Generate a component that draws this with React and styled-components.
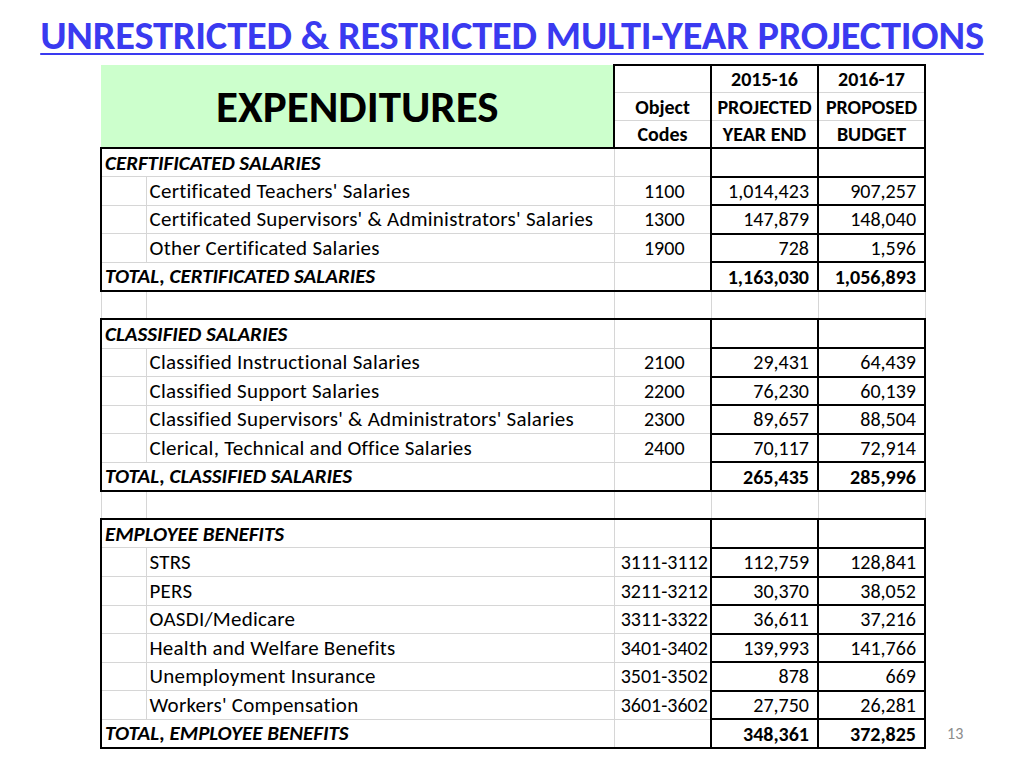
import styled, { createGlobalStyle, css } from "styled-components";

const GlobalStyle = createGlobalStyle`
    body {
        margin: 0;
        background: #ffffff;
        font-family: Carlito, Lato, "Liberation Sans", sans-serif;
        color: #000000;
    }
`;

const Page = styled.div`
    width: 1024px;
    height: 768px;
    display: flex;
    flex-direction: column;
    align-items: center;
    overflow: hidden;
`;

const Title = styled.h1`
    margin: 14px 0 0;
    font-size: 40.4px;
    font-weight: 700;
    color: #3a3af0;
    text-decoration: underline;
    text-decoration-thickness: 2px;
    text-underline-offset: 4px;
    line-height: 44px;
    letter-spacing: -0.2px;
`;

const Body = styled.div`
    align-self: flex-start;
    display: flex;
    align-items: flex-end;
    gap: 21px;
    margin-top: 6px;
    margin-left: 100px;
`;

const Sheet = styled.table`
    border-collapse: collapse;
    table-layout: fixed;
    width: 824px;
    font-size: 20px;
    col.indent { width: 45px; }
    col.label { width: 468px; }
    col.code { width: 97px; }
    col.num { width: 107px; }
`;

const Row = styled.tr`
    height: ${(p) => (p.$head ? "27.7px" : "28.57px")};
`;

const black = "2px solid #000000";

const Cell = styled.td`
    border: 1px solid #d6d6d6;
    padding: ${(p) => (p.$align === "center" ? "0 0 0 4px" : "0 8px 0 3px")};
    white-space: nowrap;
    overflow: visible;
    vertical-align: middle;
    line-height: 22px;
    text-align: ${(p) => p.$align || "left"};
    font-weight: ${(p) => (p.$bold ? 700 : 400)};
    font-style: ${(p) => (p.$italic ? "italic" : "normal")};
    ${(p) => p.$label && css`font-size: 21px; letter-spacing: 0.25px;`}
    ${(p) => p.$italic && css`font-size: 21px;`}
    ${(p) => p.$l && css`border-left: ${black};`}
    ${(p) => p.$r && css`border-right: ${black};`}
    ${(p) => p.$t && css`border-top: ${black};`}
    ${(p) => p.$b && css`border-bottom: ${black};`}
`;

const Green = styled.td`
    background: #ccffcc;
    border: 1px solid #ccffcc;
    text-align: center;
    font-size: 45px;
    font-weight: 700;
`;

const HeadCell = styled(Cell)`
    text-align: center;
    font-weight: 700;
    font-size: 20px;
    padding: 0;
`;

const PageNum = styled.div`
    font-size: 16px;
    color: #8c8c8c;
    margin-bottom: 6px;
`;

const sections = [
    {
        title: "CERFTIFICATED SALARIES",
        total: "TOTAL, CERTIFICATED SALARIES",
        sums: ["1,163,030", "1,056,893"],
        rows: [
            ["Certificated Teachers' Salaries", "1100", "1,014,423", "907,257"],
            ["Certificated Supervisors' & Administrators' Salaries", "1300", "147,879", "148,040"],
            ["Other Certificated Salaries", "1900", "728", "1,596"],
        ],
    },
    {
        title: "CLASSIFIED SALARIES",
        total: "TOTAL, CLASSIFIED SALARIES",
        sums: ["265,435", "285,996"],
        rows: [
            ["Classified Instructional Salaries", "2100", "29,431", "64,439"],
            ["Classified Support Salaries", "2200", "76,230", "60,139"],
            ["Classified Supervisors' & Administrators' Salaries", "2300", "89,657", "88,504"],
            ["Clerical, Technical and Office Salaries", "2400", "70,117", "72,914"],
        ],
    },
    {
        title: "EMPLOYEE BENEFITS",
        total: "TOTAL, EMPLOYEE BENEFITS",
        sums: ["348,361", "372,825"],
        rows: [
            ["STRS", "3111-3112", "112,759", "128,841"],
            ["PERS", "3211-3212", "30,370", "38,052"],
            ["OASDI/Medicare", "3311-3322", "36,611", "37,216"],
            ["Health and Welfare Benefits", "3401-3402", "139,993", "141,766"],
            ["Unemployment Insurance", "3501-3502", "878", "669"],
            ["Workers' Compensation", "3601-3602", "27,750", "26,281"],
        ],
    },
];

const Section = ({ s, last }) => (
    <>
        <Row>
            <Cell colSpan={2} $l $t $bold $italic>{s.title}</Cell>
            <Cell $t />
            <Cell $t $l $r />
            <Cell $t $l $r />
        </Row>
        {s.rows.map((r) => (
            <Row key={r[0]}>
                <Cell $l />
                <Cell $label>{r[0]}</Cell>
                <Cell $align="center">{r[1]}</Cell>
                <Cell $align="right" $t $b $l $r>{r[2]}</Cell>
                <Cell $align="right" $t $b $l $r>{r[3]}</Cell>
            </Row>
        ))}
        <Row>
            <Cell colSpan={2} $l $b $bold $italic>{s.total}</Cell>
            <Cell $b />
            <Cell $align="right" $t $b $l $r $bold>{s.sums[0]}</Cell>
            <Cell $align="right" $t $b $l $r $bold>{s.sums[1]}</Cell>
        </Row>
        {!last && (
            <Row>
                <Cell />
                <Cell />
                <Cell />
                <Cell />
                <Cell />
            </Row>
        )}
    </>
);

const App = () => (
    <Page>
        <GlobalStyle />
        <Title>UNRESTRICTED &amp; RESTRICTED MULTI-YEAR PROJECTIONS</Title>
        <Body>
            <Sheet>
                <colgroup>
                    <col className="indent" />
                    <col className="label" />
                    <col className="code" />
                    <col className="num" />
                    <col className="num" />
                </colgroup>
                <tbody>
                    <Row $head>
                        <Green colSpan={2} rowSpan={3}>EXPENDITURES</Green>
                        <HeadCell $t $l />
                        <HeadCell $t $l $r>2015-16</HeadCell>
                        <HeadCell $t $l $r>2016-17</HeadCell>
                    </Row>
                    <Row $head>
                        <HeadCell $l>Object</HeadCell>
                        <HeadCell $l $r>PROJECTED</HeadCell>
                        <HeadCell $l $r>PROPOSED</HeadCell>
                    </Row>
                    <Row $head>
                        <HeadCell $l $b>Codes</HeadCell>
                        <HeadCell $l $r $b>YEAR END</HeadCell>
                        <HeadCell $l $r $b>BUDGET</HeadCell>
                    </Row>
                    {sections.map((s, i) => (
                        <Section key={s.title} s={s} last={i === sections.length - 1} />
                    ))}
                </tbody>
            </Sheet>
            <PageNum>13</PageNum>
        </Body>
    </Page>
);

export default App;
